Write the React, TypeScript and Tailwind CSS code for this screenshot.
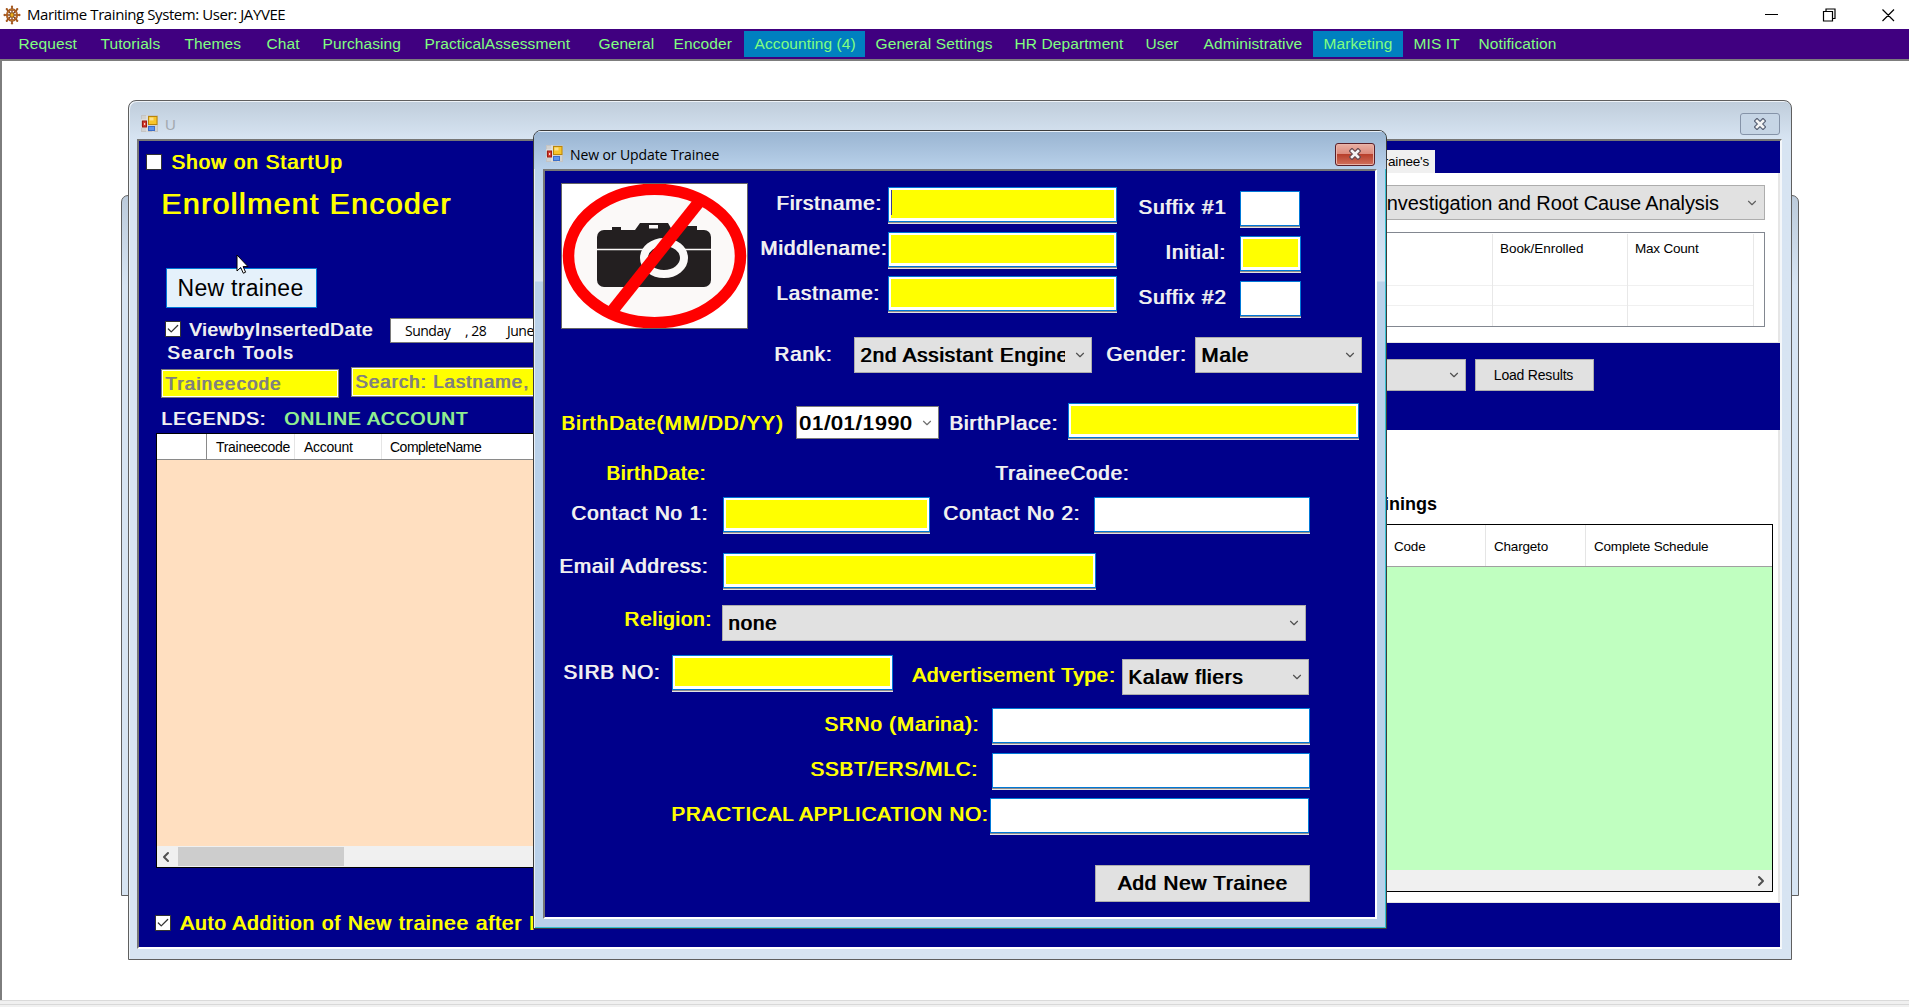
import React from "react";
import { ChevronDown, ChevronLeft, ChevronRight, Check } from "lucide-react";

const BOLD = "[text-shadow:1px_0_0_currentColor]";

const menu = [
  { t: "Request", c: "w-[82px]" },
  { t: "Tutorials", c: "w-[84px]" },
  { t: "Themes", c: "w-[82px]" },
  { t: "Chat", c: "w-[56px]" },
  { t: "Purchasing", c: "w-[102px]" },
  { t: "PracticalAssessment", c: "w-[174px]" },
  { t: "General", c: "w-[75px]" },
  { t: "Encoder", c: "w-[81px]" },
  { t: "Accounting (4)", c: "w-[121px] bg-[#0080c0]" },
  { t: "General Settings", c: "w-[139px]" },
  { t: "HR Department", c: "w-[131px]" },
  { t: "User", c: "w-[58px]" },
  { t: "Administrative", c: "w-[120px]" },
  { t: "Marketing", c: "w-[90px] bg-[#0080c0]" },
  { t: "MIS IT", c: "w-[65px]" },
  { t: "Notification", c: "w-[97px]" },
];

function HelmIcon() {
  const spokes = [0, 45, 90, 135, 180, 225, 270, 315];
  return (
    <svg className="h-[20px] w-[18px]" viewBox="-10 -10 20 20" preserveAspectRatio="none">
      {spokes.map((a) => (
        <g key={a} transform={`rotate(${a})`}>
          <line x1="0" y1="0" x2="0" y2="-9" stroke="#7a3d12" strokeWidth="1.4" />
          <circle cx="0" cy="-8.2" r="1.2" fill="#a85a20" />
        </g>
      ))}
      <circle r="5.6" fill="none" stroke="#9a4a14" strokeWidth="2.2" />
      <circle r="5.6" fill="none" stroke="#d8923c" strokeWidth="0.6" />
      <circle r="2.2" fill="#e8b020" stroke="#8a4a10" strokeWidth="0.7" />
    </svg>
  );
}

function FormIcon() {
  return (
    <svg className="mt-[7px] h-[17px] w-[17px] shrink-0" viewBox="0 0 17 17">
      <rect x="0.5" y="0.5" width="16" height="16" fill="#d2d2d0" stroke="#c4c4c4" />
      <path d="M6 0v17M0 5h6M0 12h6M12 11v6" stroke="#e9e9e9" />
      <rect x="1.5" y="6" width="4" height="6" fill="#d33a2c" stroke="#9c1b12" />
      <rect x="3" y="8" width="1.2" height="2" fill="#f6d0ca" />
      <rect x="7.5" y="1.5" width="8.5" height="8" fill="#f7c52b" stroke="#b98509" />
      <rect x="8.5" y="2.5" width="4" height="3" fill="#fbe08a" />
      <rect x="7.5" y="11.5" width="6" height="4" fill="#5b93ee" stroke="#3c6fc9" />
    </svg>
  );
}

function CloseGlyph({ stroke }: { stroke: string }) {
  return (
    <svg className="h-[12px] w-[12px]" viewBox="0 0 12 12">
      <path d="M3 3 9 9M9 3 3 9" stroke={stroke} strokeWidth="5" strokeLinecap="square" />
      <path d="M3 3 9 9M9 3 3 9" stroke="#f4f4f4" strokeWidth="2.6" strokeLinecap="square" />
    </svg>
  );
}

function CheckBox({ on, className = "" }: { on?: boolean; className?: string }) {
  return (
    <span className={`flex h-[16px] w-[16px] shrink-0 items-center justify-center border border-[#333] bg-white ${className}`}>
      {on && <Check className="h-[14px] w-[14px] text-[#333]" strokeWidth={2.2} />}
    </span>
  );
}

function Label({ className = "", children }: { className?: string; children: React.ReactNode }) {
  return (
    <span className={`block shrink-0 whitespace-nowrap text-[20.5px] leading-[24px] ${BOLD} ${className}`}>
      {children}
    </span>
  );
}

function Field({ className = "", yellow, caret }: { className?: string; yellow?: boolean; caret?: boolean }) {
  return (
    <div className={`flex h-[37px] shrink-0 flex-col ${className}`}>
      <div className="h-[35px] border border-[#0078d7] bg-white px-[2px] pt-[2px] pb-[3px]">
        {yellow && (
          <div className="h-full bg-[#ffff00]">{caret && <div className="h-[25px] w-px bg-[#3a3a96]" />}</div>
        )}
      </div>
      <div className="h-px bg-[#8d8d8d]" />
      <div className="h-px bg-[#e3e3e3]" />
    </div>
  );
}

function Select({ className = "h-[36px]", children }: { className?: string; children?: React.ReactNode }) {
  return (
    <div className={`flex shrink-0 items-center border border-[#adadad] bg-[#e1e1e1] pr-[4px] pl-[5px] text-black ${className}`}>
      <div className={`min-w-0 flex-1 overflow-hidden text-[20.5px] leading-[24px] tracking-[0.85px] whitespace-nowrap ${BOLD}`}>
        {children}
      </div>
      <ChevronDown className="ml-[8px] h-[14px] w-[14px] shrink-0 text-[#505050]" strokeWidth={2} />
    </div>
  );
}

function NoPhoto() {
  return (
    <div className="mt-[12px] ml-[16px] h-[146px] w-[187px] shrink-0 border border-[#646464] bg-white">
      <svg className="h-full w-full" viewBox="0 0 185 144" preserveAspectRatio="none">
        <ellipse cx="92.500" cy="72" rx="86" ry="67" fill="#fbf9f8" stroke="#ff0000" strokeWidth="9" />
        <ellipse cx="92.500" cy="72" rx="86" ry="66.700" fill="none" stroke="#ff0000" strokeWidth="11.500" />
        <path d="M50 46v-3h9v3zM73 46l5-7h28l4 7zM122 46v-4h13v4z" fill="#231f20" />
        <rect x="87" y="41" width="9" height="3.5" fill="#fbf9f8" />
        <rect x="35" y="46" width="114" height="57" rx="7" fill="#231f20" />
        <path d="M35 65.5h114" stroke="#fbf9f8" strokeWidth="1.3" />
        <ellipse cx="102" cy="74" rx="20" ry="16" fill="#231f20" stroke="#fbf9f8" strokeWidth="8" />
        <path d="M137 18 51 126" stroke="#ff0000" strokeWidth="12" />
      </svg>
    </div>
  );
}

function TraineeForm() {
  return (
    <div className="h-[746px] overflow-hidden bg-[#00008b] tracking-[0.88px] text-[#f0f0f0]">
      <div className="flex h-[166px]">
        <NoPhoto />
        <div className="flex w-[140px] shrink-0 flex-col gap-[21px] pt-[20px]">
          <Label className="pl-[28px]">Firstname:</Label>
          <Label className="pl-[12px]">Middlename:</Label>
          <Label className="pl-[28px]">Lastname:</Label>
        </div>
        <div className="flex w-[229px] shrink-0 flex-col gap-[8px] pt-[16px]">
          <Field yellow caret />
          <Field yellow />
          <Field yellow className="-mt-px" />
        </div>
        <div className="flex w-[123px] shrink-0 flex-col gap-[21px] pt-[24px]">
          <Label className="pl-[21px] tracking-[1px]">Suffix #1</Label>
          <Label className="pl-[48px]">Initial:</Label>
          <Label className="pl-[21px] tracking-[1px]">Suffix #2</Label>
        </div>
        <div className="flex w-[61px] shrink-0 flex-col gap-[8px] pt-[20px]">
          <Field className="mr-px" />
          <Field yellow />
          <Field />
        </div>
      </div>

      <div className="flex h-[65px] items-start">
        <Label className="mt-[5px] w-[309px] pl-[229px]">Rank:</Label>
        <Select className="h-[36px] w-[238px]">2nd Assistant Engineer</Select>
        <Label className="mt-[5px] w-[103px] pl-[14px]">Gender:</Label>
        <Select className="h-[36px] w-[167px]">Male</Select>
      </div>

      <div className="flex h-[59px] items-start">
        <Label className="mt-[9px] w-[251px] pl-[16px] tracking-[1.1px] text-[#ffff00]">BirthDate(MM/DD/YY)</Label>
        <div className="mt-[4px] flex h-[33px] w-[143px] shrink-0 items-center border border-[#7a7a7a] bg-white px-[2px] text-black">
          <Label className="flex-1 tracking-[1.05px]">01/01/1990</Label>
          <ChevronDown className="mr-[2px] h-[14px] w-[14px] text-[#707070]" strokeWidth={2} />
        </div>
        <Label className="mt-[9px] w-[129px] pl-[10px]">BirthPlace:</Label>
        <Field yellow className="mt-px w-[291px]" />
      </div>

      <div className="flex h-[35px] items-start">
        <Label className="w-[450px] pl-[61px] text-[#ffff00]">BirthDate:</Label>
        <Label>TraineeCode:</Label>
      </div>

      <div className="flex h-[56px] items-start">
        <Label className="mt-[5px] w-[178px] pl-[26px]">Contact No 1:</Label>
        <Field yellow className="mt-px w-[207px]" />
        <Label className="mt-[5px] w-[164px] pl-[13px]">Contact No 2:</Label>
        <Field className="mt-px w-[216px]" />
      </div>

      <div className="flex h-[53px] items-start">
        <Label className="mt-[2px] w-[178px] pl-[14px]">Email Address:</Label>
        <Field yellow className="mt-px w-[373px]" />
      </div>

      <div className="flex h-[50px] items-start">
        <Label className="mt-[2px] w-[177px] pl-[79px] text-[#ffff00]">Religion:</Label>
        <Select className="h-[36px] w-[584px]">none</Select>
      </div>

      <div className="flex h-[52px] items-start">
        <Label className="mt-[5px] w-[127px] pl-[18px]">SIRB NO:</Label>
        <Field yellow className="w-[221px]" />
        <Label className="mt-[8px] w-[229px] pl-[19px] text-[#ffff00]">Advertisement Type:</Label>
        <Select className="mt-[4px] h-[36px] w-[187px]">Kalaw fliers</Select>
      </div>

      <div className="flex h-[45px] items-start">
        <Label className="mt-[5px] w-[447px] pl-[279px] text-[#ffff00]">SRNo (Marina):</Label>
        <Field className="mt-px w-[318px]" />
      </div>
      <div className="flex h-[45px] items-start">
        <Label className="mt-[5px] w-[447px] pl-[265px] text-[#ffff00]">SSBT/ERS/MLC:</Label>
        <Field className="mt-px w-[318px]" />
      </div>
      <div className="flex h-[68px] items-start">
        <Label className="mt-[5px] w-[445px] pl-[126px] text-[#ffff00]">PRACTICAL APPLICATION NO:</Label>
        <Field className="mt-px w-[319px]" />
      </div>

      <button className="ml-[550px] flex h-[37px] w-[215px] items-center justify-center border border-[#adadad] bg-[#e1e1e1] pb-px tracking-[0.85px] text-black">
        <Label>Add New Trainee</Label>
      </button>
    </div>
  );
}

function EncoderPanel() {
  return (
    <div className="flex w-[1000px] shrink-0 flex-col overflow-hidden text-[#f0f0f0]">
      <div className="mt-[9px] flex h-[24px] text-[#ffff00]">
        <CheckBox className="mt-[4px] ml-[7px]" />
        <span className={`ml-[9px] text-[20.5px] leading-[24px] tracking-[1.1px] ${BOLD}`}>Show on StartUp</span>
      </div>
      <h1 className={`mt-[12px] ml-[22px] text-[30px] leading-[36px] tracking-[1.5px] text-[#ffff00] ${BOLD}`}>
        Enrollment Encoder
      </h1>
      <button className="mt-[46px] ml-[27px] flex h-[40px] w-[151px] items-center justify-center border border-[#0078d7] bg-[#e5f1fb] pt-px pr-[2px] text-[23px] tracking-[0.3px] whitespace-nowrap text-black">
        New trainee
      </button>
      <div className="mt-[10px] flex h-[25px] items-start">
        <CheckBox on className="mt-[3px] ml-[26px]" />
        <span className={`mt-[2px] ml-[8px] w-[201px] text-[18.5px] leading-[20px] tracking-[1.05px] ${BOLD}`}>
          ViewbyInsertedDate
        </span>
        <div className="flex h-[25px] w-[240px] items-center border border-[#7a7a7a] bg-white pl-[14px] font-['Open_Sans',sans-serif] text-[14px] tracking-[-0.5px] text-black">
          <span className="w-[60px]">Sunday</span>
          <span className="w-[42px]">, 28</span>
          <span>June</span>
        </div>
      </div>
      <span className={`ml-[28px] text-[18.5px] leading-[20px] tracking-[1.7px] ${BOLD}`}>Search Tools</span>
      <div className="mt-[4px] flex h-[32px] items-start text-[18.5px] leading-[20px] text-[#808080]">
        <div className="mt-[2px] ml-[22px] h-[29px] w-[178px] border border-[#7a7a7a] bg-white p-px">
          <div className={`h-full bg-[#ffff00] pt-[3px] pl-[2px] tracking-[1.3px] ${BOLD}`}>Traineecode</div>
        </div>
        <div className="ml-[12px] h-[30px] w-[400px] border border-[#7a7a7a] bg-white p-px">
          <div className={`h-full bg-[#ffff00] pt-[3px] pl-[2px] tracking-[1.1px] ${BOLD}`}>Search: Lastname, Firstname</div>
        </div>
      </div>
      <div className={`mt-[10px] flex h-[20px] text-[19px] leading-[20px] tracking-[1.1px] ${BOLD}`}>
        <span className="w-[123px] pl-[22px]">LEGENDS:</span>
        <span className="pl-[22px] text-[#90ee90]">ONLINE ACCOUNT</span>
      </div>
      <div className="mt-[4px] ml-[17px] flex h-[435px] w-[900px] flex-col border border-black bg-[#ffdfc0]">
        <div className="flex h-[26px] shrink-0 items-center border-b border-[#8a8a8a] bg-white text-[14px] tracking-[-0.3px] text-black">
          <span className="h-full w-[50px] border-r border-[#8a8a8a]" />
          <span className="flex h-full w-[88px] items-center border-r border-[#e5e5e5] pt-px pl-[9px]">Traineecode</span>
          <span className="flex h-full w-[87px] items-center border-r border-[#e5e5e5] pt-px pl-[9px]">Account</span>
          <span className="pt-px pl-[8px] tracking-[-0.5px]">CompleteName</span>
        </div>
        <div className="flex-1" />
        <div className="flex h-[21px] items-center bg-[#f0f0f0]">
          <ChevronLeft className="ml-[1px] h-[16px] w-[16px] text-[#505050]" strokeWidth={3} />
          <div className="ml-[4px] h-[19px] w-[166px] bg-[#cdcdcd]" />
        </div>
      </div>
      <div className="mt-[43px] flex h-[24px] text-[#ffff00]">
        <CheckBox on className="mt-[4px] ml-[16px]" />
        <span className={`ml-[9px] text-[20.5px] leading-[24px] tracking-[1.07px] whitespace-nowrap ${BOLD}`}>
          Auto Addition of New trainee after I
        </span>
      </div>
    </div>
  );
}

function SchedulePanel() {
  return (
    <div className="flex w-[641px] shrink-0 flex-col text-black">
      <div className="flex h-[32px] items-end">
        <div className="flex h-[23px] w-[296px] items-center justify-end bg-[#f0f0f0] pt-[2px] pr-[6px] text-[13.5px] tracking-[-0.2px]">Trainee's</div>
      </div>
      <div className="h-[170px] border-r-2 border-b border-[#e6e6e6] bg-white pt-[12px]">
        <div className="flex h-[35px] w-[626px] items-center justify-end border border-[#adadad] bg-[#e1e1e1] pr-[4px]">
          <span className="text-[20px] tracking-[-0.1px] whitespace-nowrap">Investigation and Root Cause Analysis</span>
          <ChevronDown className="ml-[26px] mr-px h-[14px] w-[14px] text-[#606060]" strokeWidth={2} />
        </div>
        <div className="mt-[12px] flex h-[95px] w-[626px] border border-[#828790] pt-px text-[13.5px] tracking-[-0.2px]">
          <div className="flex w-[353px] flex-col border-r border-[#e8e8e8]">
            <div className="mt-[51px] h-[21px] border-y border-[#f0f0f0]" />
          </div>
          <div className="flex w-[135px] flex-col border-r border-[#e8e8e8]">
            <span className="flex h-[30px] items-center pl-[7px] tracking-[-0.05px]">Book/Enrolled</span>
            <div className="mt-[21px] h-[21px] border-y border-[#f0f0f0]" />
          </div>
          <div className="flex w-[126px] flex-col border-r border-[#e8e8e8]">
            <span className="flex h-[30px] items-center pl-[7px]">Max Count</span>
            <div className="mt-[21px] h-[21px] border-y border-[#f0f0f0]" />
          </div>
        </div>
      </div>
      <div className="flex h-[87px] items-start pt-[16px]">
        <Select className="h-[32px] w-[327px]" />
        <button className="ml-[9px] flex h-[32px] w-[119px] items-center justify-center border border-[#adadad] bg-[#e1e1e1] pr-[2px] text-[14px] tracking-[-0.2px]">
          Load Results
        </button>
      </div>
      <div className="h-[473px] border-r-2 border-b border-[#e6e6e6] bg-white pt-[64px]">
        <div className="mb-[10px] w-[298px] text-right text-[18px] leading-[20px] font-bold">Trainings</div>
        <div className="flex h-[368px] w-[634px] flex-col border border-black bg-[#c0ffc0]">
          <div className="flex h-[42px] shrink-0 items-center border-b border-[#a0a0a0] bg-white text-[13.5px] tracking-[-0.2px]">
            <span className="flex h-full w-[346px] items-center border-r border-[#e5e5e5] pt-[3px] pl-[254px]">Code</span>
            <span className="flex h-full w-[100px] items-center border-r border-[#e5e5e5] pt-[3px] pl-[8px]">Chargeto</span>
            <span className="pt-[3px] pl-[8px]">Complete Schedule</span>
          </div>
          <div className="flex-1" />
          <div className="flex h-[21px] items-center justify-end bg-[#f0f0f0]">
            <ChevronRight className="mr-[3px] h-[16px] w-[16px] text-[#505050]" strokeWidth={3} />
          </div>
        </div>
      </div>
    </div>
  );
}

export default function App() {
  return (
    <div className="flex h-[1007px] w-[1909px] flex-col overflow-hidden bg-white font-['Liberation_Sans',Arial,sans-serif]">
      <header className="flex h-[29px] shrink-0 items-center bg-white pl-[3px] font-['Open_Sans',sans-serif] text-[15px] text-black">
        <HelmIcon />
        <span className="ml-[6px] flex-1 tracking-[-0.42px]">Maritime Training System: User: JAYVEE</span>
        <svg className="h-[14px] w-[144px]" viewBox="0 0 144 14" fill="none" stroke="#000" strokeWidth="1.2">
          <path d="M0 6.500h13M58.5 3.5h9v9.500h-9zM61 3.500v-2.500h9v9.500h-2.500M117.500 1.500l11.500 11.500M129 1.500l-11.500 11.500" />
        </svg>
      </header>
      <nav className="flex h-[30px] shrink-0 items-center bg-[#400080] pl-[8px] text-[15.5px] tracking-[0.1px] text-[#80ff80]">
        {menu.map((m) => (
          <span key={m.t} className={`flex h-[26px] shrink-0 items-center pl-[10.5px] whitespace-nowrap ${m.c}`}>
            {m.t}
          </span>
        ))}
      </nav>

      <main className="relative min-h-0 flex-1 border-t-2 border-l-2 border-[#7d7d7d]">
        <section className="absolute top-[134px] left-[119px] h-[701px] w-[1678px] rounded-t-[7px] border border-[#5f5f5f] bg-linear-to-b from-[#bccbdb] to-[#d7e4f2] to-[90px]" />

        <section className="absolute top-[39px] left-[126px] flex h-[860px] w-[1664px] flex-col overflow-hidden rounded-t-[8px] border border-[#5f5f5f] bg-linear-to-b from-[#bfcddb] to-[#d7e4f2] to-[38px] shadow-[inset_1px_1px_0_#eef3f8]">
          <div className="flex h-[38px] shrink-0 items-center pl-[12px] text-[15px] text-[#a3a9b0]">
            <FormIcon />
            <span className="ml-[7px] flex-1 pt-[10px]">U</span>
            <button className="mt-[8px] mr-[11px] flex h-[22px] w-[40px] items-center justify-center rounded-[3px] border border-[#8593a8] bg-[#c6d5e5]">
              <CloseGlyph stroke="#5b6478" />
            </button>
          </div>
          <div className="mr-[9px] ml-[8px] flex h-[810px] border-2 border-t-[#767676] border-r-[#f4f7fa] border-b-white border-l-[#767676] bg-[#00008b]">
            <EncoderPanel />
            <SchedulePanel />
          </div>
        </section>

        <section className="absolute top-[69px] left-[531px] flex h-[799px] w-[854px] flex-col overflow-hidden rounded-t-[8px] border border-[#3c3c3c] bg-[linear-gradient(#99b4d1,#b9d1ea_38px,#dbe6f4_150px,#b9d1ea_151px)] shadow-[inset_1px_1px_0_#e8f0f8,inset_-1px_-1px_0_#35c0d0]">
          <div className="flex h-[38px] shrink-0 items-center bg-linear-to-b from-[#99b4d1] to-[#b9d1ea] pl-[12px] text-black shadow-[inset_0_1px_0_#e8f0f8]">
            <FormIcon />
            <span className="ml-[7px] flex-1 pt-[8px] font-['Open_Sans',sans-serif] text-[14px] tracking-[-0.1px]">
              New or Update Trainee
            </span>
            <button className="mt-[8px] mr-[11px] flex h-[23px] w-[40px] items-center justify-center rounded-[3px] border border-[#5a1f28] bg-[linear-gradient(#eab0a4,#dc8a7c_48%,#b8402c_50%,#d0705c)] shadow-[inset_0_0_0_1px_#e9b3a8]">
              <CloseGlyph stroke="#6a4a50" />
            </button>
          </div>
          <div className="mr-[9px] ml-[9px] border-2 border-t-[#767676] border-r-white border-b-white border-l-[#767676]">
            <TraineeForm />
          </div>
        </section>

        <svg className="absolute top-[193px] left-[234px] h-[20px] w-[13px]" viewBox="0 0 13 20">
          <path d="M1 1v16l3.700-3.500 2.600 5.700 2.300-1-2.500-5.600H12z" fill="#fff" stroke="#000" />
        </svg>
      </main>

      <footer className="flex h-[7px] shrink-0 flex-col justify-center border-t border-[#dadada] bg-[#f0f0f0]">
        <div className="h-px bg-[#d8d8d8]" />
      </footer>
    </div>
  );
}
